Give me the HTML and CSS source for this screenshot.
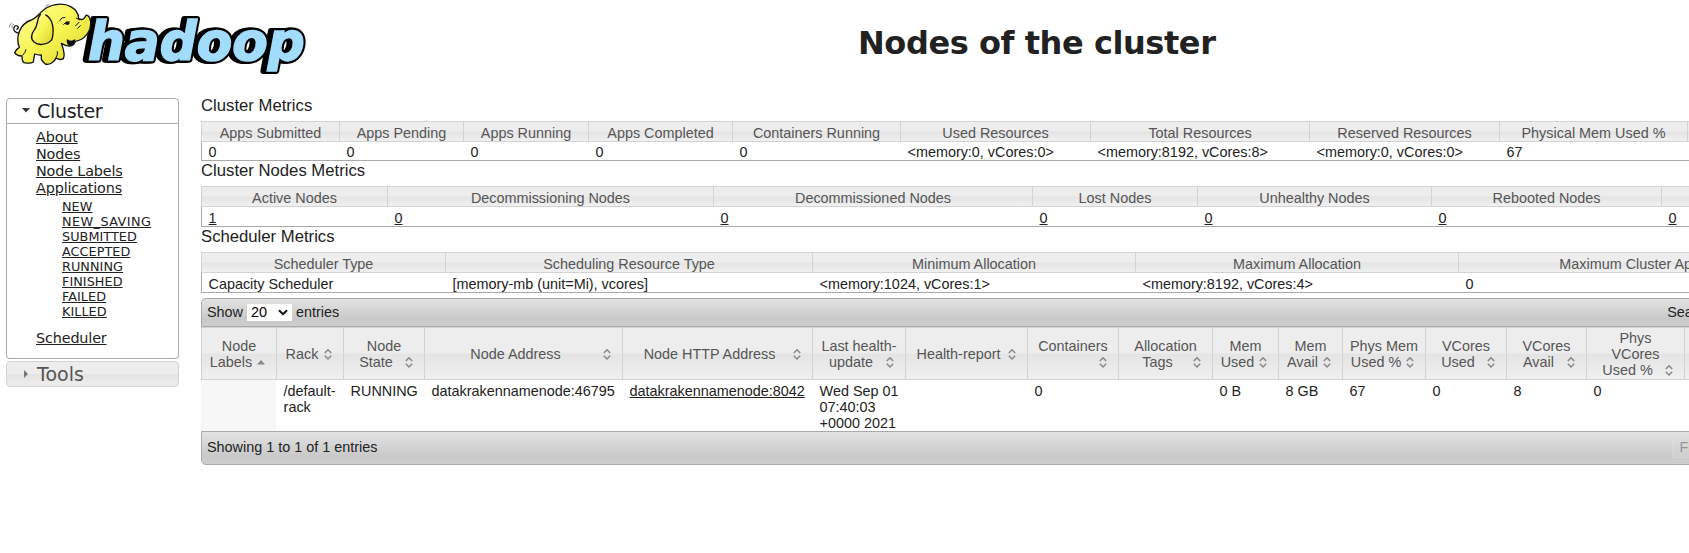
FILE: index.html
```html
<!DOCTYPE html>
<html lang="en">
<head>
<meta charset="utf-8">
<title>Nodes of the cluster</title>
<link rel="stylesheet" href="styles.css">
</head>
<body>
<svg class="defs" width="0" height="0">
  <symbol id="both" viewBox="0 0 16 16"><path d="M4.8 7L8 3.8 11.2 7M4.8 9.8L8 13l3.2-3.2" fill="none" stroke="#888" stroke-width="1.5"/></symbol>
  <symbol id="asc" viewBox="0 0 16 16"><path d="M4 10.5h8L8 6z" fill="#888"/></symbol>
</svg>
<header class="top">
  <svg class="logo" width="310" height="80" viewBox="0 0 930 240" role="img" aria-label="hadoop">
    <defs>
      <linearGradient id="skin" x1="0" y1="0" x2="1" y2="1">
        <stop offset="0" stop-color="#fdfca0"/><stop offset=".5" stop-color="#f8f552"/><stop offset="1" stop-color="#d8d02c"/>
      </linearGradient>
      <g id="word"><text x="264" y="180" textLength="650" lengthAdjust="spacingAndGlyphs">hadoop</text></g>
    </defs>
    <use href="#word" class="word-edge" x="-12" y="1"/>
    <use href="#word" class="word-edge" x="-6"/>
    <use href="#word" class="word-edge"/>
    <use href="#word" class="word-fill"/>
    <g class="elephant">
      <path d="M60 100 Q38 98 42 82 Q48 72 55 82 Q54 88 49 88" class="tail"/>
      <path d="M122 38 C145 12 188 6 212 20 C230 30 236 44 236 56 C248 62 254 56 258 46 Q268 44 272 66 C274 96 252 120 226 124 C220 144 200 140 184 130 C190 146 196 166 190 176 Q180 182 168 174 C164 186 148 196 136 192 Q128 186 124 178 L124 165 Q114 166 104 162 L100 186 Q92 192 72 188 Q66 184 66 168 Q50 168 44 158 Q50 146 58 142 C46 112 58 72 94 60 Q106 54 122 38 Z"/>
      <path d="M122 42 C108 58 116 72 104 88 Q86 112 102 126 C118 140 146 132 156 118 C164 86 158 56 136 44"/>
      <path d="M178 64 Q184 50 196 52 M190 74 Q198 62 210 66 M228 54 L240 60 M226 78 L238 66 M232 86 L242 76" class="thin"/>
      <path d="M202 120 Q210 128 224 120 Q222 136 210 136 Q202 134 202 120Z" class="mouth"/>
      <path d="M28 82 Q28 74 36 68 M36 86 Q34 76 42 72 M136 22 Q138 14 148 14" class="faint"/>
      <path d="M68 166 Q76 158 78 148 M168 174 Q174 164 172 154" class="thin"/>
      <ellipse cx="202" cy="70" rx="6" ry="5" fill="#111"/>
    </g>
  </svg>
  <h1>Nodes of the cluster</h1>
</header>
<div class="body">
  <nav class="side">
    <h3 class="fold open"><svg width="8" height="6"><path d="M0 0h8l-4 4.5z" fill="#333"/></svg>Cluster</h3>
    <div class="panel">
      <ul>
        <li><a>About</a></li><li><a>Nodes</a></li><li><a>Node Labels</a></li><li><a>Applications</a>
          <ul class="states"><li><a>NEW</a></li><li><a class="wide">NEW_SAVING</a></li><li><a>SUBMITTED</a></li><li><a>ACCEPTED</a></li><li><a>RUNNING</a></li><li><a>FINISHED</a></li><li><a>FAILED</a></li><li><a>KILLED</a></li></ul></li>
        <li><a>Scheduler</a></li>
      </ul>
    </div>
    <h3 class="fold closed"><svg width="8" height="8"><path d="M2 0v8l4-4z" fill="#777"/></svg>Tools</h3>
  </nav>
  <main class="content">
    <h2 class="lead">Cluster Metrics</h2>
    <table class="metrics m1">
      <colgroup><col style="width:138px"><col style="width:124px"><col style="width:125px"><col style="width:144px"><col style="width:168px"><col style="width:190px"><col style="width:219px"><col style="width:190px"><col style="width:188px"><col style="width:190px"></colgroup>
      <tr><th>Apps Submitted</th><th>Apps Pending</th><th>Apps Running</th><th>Apps Completed</th><th>Containers Running</th><th>Used Resources</th><th>Total Resources</th><th>Reserved Resources</th><th>Physical Mem Used %</th><th></th></tr>
      <tr><td>0</td><td>0</td><td>0</td><td>0</td><td>0</td><td>&lt;memory:0, vCores:0&gt;</td><td>&lt;memory:8192, vCores:8&gt;</td><td>&lt;memory:0, vCores:0&gt;</td><td>67</td><td></td></tr>
    </table>
    <h2>Cluster Nodes Metrics</h2>
    <table class="metrics m2">
      <colgroup><col style="width:186px"><col style="width:326px"><col style="width:319px"><col style="width:165px"><col style="width:234px"><col style="width:230px"><col style="width:216px"></colgroup>
      <tr><th>Active Nodes</th><th>Decommissioning Nodes</th><th>Decommissioned Nodes</th><th>Lost Nodes</th><th>Unhealthy Nodes</th><th>Rebooted Nodes</th><th></th></tr>
      <tr><td><a>1</a></td><td><a>0</a></td><td><a>0</a></td><td><a>0</a></td><td><a>0</a></td><td><a>0</a></td><td><a>0</a></td></tr>
    </table>
    <h2>Scheduler Metrics</h2>
    <table class="metrics m3">
      <colgroup><col style="width:244px"><col style="width:367px"><col style="width:323px"><col style="width:323px"><col style="width:436px"></colgroup>
      <tr><th>Scheduler Type</th><th>Scheduling Resource Type</th><th>Minimum Allocation</th><th>Maximum Allocation</th><th>Maximum Cluster Application Priority</th></tr>
      <tr><td>Capacity Scheduler</td><td>[memory-mb (unit=Mi), vcores]</td><td>&lt;memory:1024, vCores:1&gt;</td><td>&lt;memory:8192, vCores:4&gt;</td><td>0</td></tr>
    </table>
    <div class="bar bar-top">
      <span>Show</span>
      <span class="select">20<svg width="10" height="7" viewBox="0 0 10 7"><path d="M1 1.2l4 4 4-4" fill="none" stroke="#111" stroke-width="2"/></svg></span>
      <span>entries</span>
      <span class="search">Search:</span>
    </div>
    <table class="nodes">
      <colgroup><col style="width:75px"><col style="width:67px"><col style="width:81px"><col style="width:198px"><col style="width:190px"><col style="width:93px"><col style="width:122px"><col style="width:91px"><col style="width:94px"><col style="width:66px"><col style="width:64px"><col style="width:83px"><col style="width:81px"><col style="width:80px"><col style="width:98px"><col style="width:93px"></colgroup>
      <tr>
        <th>Node<div><span>Labels</span><svg><use href="#asc"/></svg></div></th>
        <th><div><span>Rack</span><svg><use href="#both"/></svg></div></th>
        <th>Node<div><span>State</span><svg><use href="#both"/></svg></div></th>
        <th><div><span>Node Address</span><svg><use href="#both"/></svg></div></th>
        <th><div><span>Node HTTP Address</span><svg><use href="#both"/></svg></div></th>
        <th>Last health-<div><span>update</span><svg><use href="#both"/></svg></div></th>
        <th><div><span>Health-report</span><svg><use href="#both"/></svg></div></th>
        <th>Containers<div><span></span><svg><use href="#both"/></svg></div></th>
        <th>Allocation<div><span>Tags</span><svg><use href="#both"/></svg></div></th>
        <th>Mem<div><span>Used</span><svg><use href="#both"/></svg></div></th>
        <th>Mem<div><span>Avail</span><svg><use href="#both"/></svg></div></th>
        <th>Phys Mem<div><span>Used %</span><svg><use href="#both"/></svg></div></th>
        <th>VCores<div><span>Used</span><svg><use href="#both"/></svg></div></th>
        <th>VCores<div><span>Avail</span><svg><use href="#both"/></svg></div></th>
        <th>Phys<br>VCores<div><span>Used %</span><svg><use href="#both"/></svg></div></th>
        <th></th>
      </tr>
      <tr>
        <td class="sorted"></td><td>/default-<br>rack</td><td>RUNNING</td><td>datakrakennamenode:46795</td><td><a>datakrakennamenode:8042</a></td><td>Wed Sep 01<br>07:40:03<br>+0000 2021</td><td></td><td>0</td><td></td><td>0 B</td><td>8 GB</td><td>67</td><td>0</td><td>8</td><td>0</td><td></td>
      </tr>
    </table>
    <div class="bar bar-bottom"><span>Showing 1 to 1 of 1 entries</span><span class="first">First</span></div>
  </main>
</div>
</body>
</html>
```
FILE: styles.css
```css
* { box-sizing: border-box; }
body { margin: 0; width: 1689px; height: 553px; overflow: hidden; background: #fff; color: #222; font: 14.4px/16px "Liberation Sans", Arial, sans-serif; }
h1, h2, h3, ul { margin: 0; padding: 0; font-weight: normal; list-style: none; }
a { color: #222; text-decoration: underline; }
.defs { display: none; }
.top { display: flex; height: 98px; }
.logo { display: block; font: italic bold 160px "DejaVu Sans", Verdana, sans-serif; }
.word-edge { fill: #000; stroke: #000; stroke-width: 18; stroke-linejoin: round; }
.word-fill { fill: #a1dcfd; stroke: #a1dcfd; stroke-width: 5; }
.elephant path { fill: url(#skin); stroke: #111; stroke-width: 4; stroke-linejoin: round; }
.elephant .tail { fill: none; }
.elephant .thin { fill: none; stroke-width: 3; }
.elephant .faint { fill: none; stroke: #777; stroke-width: 2.5; }
.elephant .mouth { fill: #111; }
h1 { font: bold 32px/40px "DejaVu Sans", Verdana, sans-serif; letter-spacing: -.43px; margin: 23px 0 0 548px; }
.body { display: flex; align-items: flex-start; }
.side { width: 173px; margin-left: 6px; flex: none; font-family: "DejaVu Sans", Verdana, sans-serif; }
.fold { display: flex; align-items: center; gap: 7px; height: 26px; padding-left: 15px; border: 1px solid #aaa; font-size: 19px; line-height: 24px; letter-spacing: -.3px; }
.open { border-radius: 4px 4px 0 0; }
.closed { margin-top: 2px; padding-bottom: 1px; border-color: #d3d3d3; border-radius: 4px; color: #555; letter-spacing: 0; background: linear-gradient(#ededed 0 48%, #e4e4e4 52%, #eee); }
.panel { height: 235px; border: 1px solid #aaa; border-top: 0; border-radius: 0 0 4px 4px; padding: 5px 0 0 29px; font-size: 14.4px; line-height: 17px; letter-spacing: -.16px; }
.states { margin: 2px 0 11px 26px; font-size: 12.8px; line-height: 15px; letter-spacing: .05px; }
.wide { letter-spacing: .42px; }
.content { flex: none; width: 1676px; margin-left: 22px; }
h2 { font-size: 16.7px; line-height: 19px; height: 25px; }
.lead { margin-top: -2px; }
table { border-collapse: separate; border-spacing: 0; table-layout: fixed; width: 1676px; }
th { font-weight: normal; color: #555; padding: 0; border: 1px solid #d3d3d3; border-right: 0; background: linear-gradient(#ededed 0 48%, #e4e4e4 52%, #f0f0f0); white-space: nowrap; }
td { padding: 0; text-align: left; vertical-align: top; white-space: nowrap; }
.metrics th { height: 21px; padding-top: 2px; }
.metrics td { border-bottom: 1px solid #aaa; height: 19px; padding: 2px 0 0 7.5px; }
.metrics td:first-child { border-left: 1px solid #aaa; padding-left: 6.5px; }
.metrics.m2 td, .metrics.m3 td { height: 20px; padding-top: 3px; }
.m3 { width: 1693px; }
.bar { display: flex; align-items: center; border: 1px solid #aaa; padding: 0 0 2px 5px; background: linear-gradient(#e3e3e3, #c9c9c9 75%, #cdcdcd); white-space: nowrap; }
.bar-top { height: 29px; margin-top: 5px; border-radius: 5px 0 0 0; }
.select { display: flex; align-items: center; justify-content: space-between; width: 45px; height: 17px; padding: 0 4px 1px; margin: 2px 4px 0; background: #fff; color: #000; }
.search { margin-left: 1328px; }
.nodes { width: 1576px; }
.nodes th { height: 53px; padding: 0 7px; }
.nodes th div { display: flex; height: 16px; }
.nodes th span { flex: 1; }
.nodes th svg { width: 16px; height: 16px; flex: none; }
.nodes td { height: 51px; padding: 3px 0 0 7.6px; }
.nodes td.sorted { background: #f7f7f7; }
.bar-bottom { height: 34px; border-radius: 0 0 0 5px; }
.first { margin-left: 1295px; padding: 2px 6px; border: 1px solid #e8e8e8; background: #ddd; opacity: .35; }
```
